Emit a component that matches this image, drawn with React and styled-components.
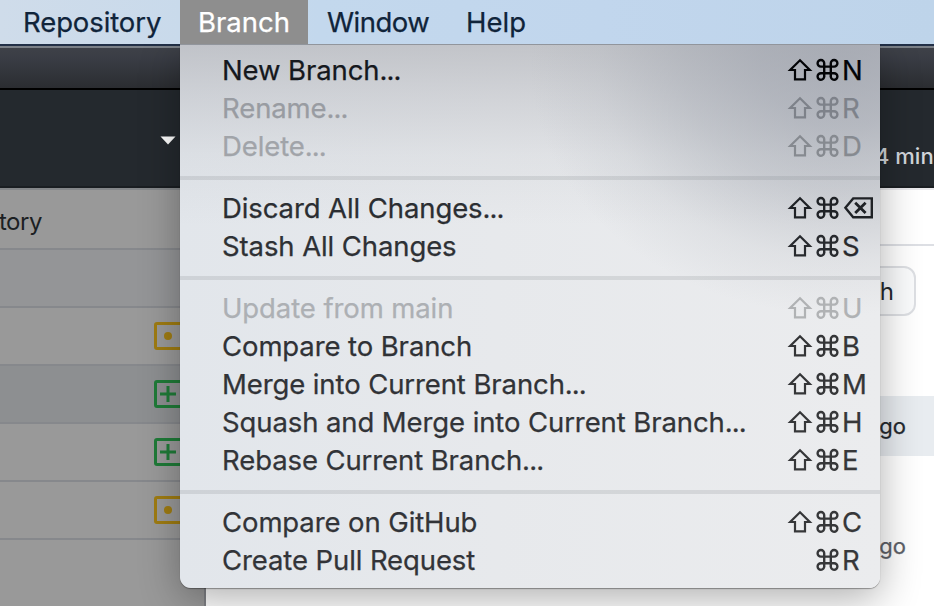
import React from "react";
import styled, { createGlobalStyle, css } from "styled-components";

const GlobalStyle = createGlobalStyle`
  * { box-sizing: border-box; }
  html, body { margin: 0; padding: 0; overflow: hidden; background: #fff; }
  body { font-family: Inter, "Liberation Sans", sans-serif; }
`;

const Screen = styled.div`
  position: relative;
  display: flex;
  flex-direction: column;
  width: 934px;
  height: 606px;
  overflow: hidden;
  background: #fff;
`;

const MenuBar = styled.nav`
  display: flex;
  flex: 0 0 44px;
  padding-left: 4px;
  background: linear-gradient(90deg, #cfdcea 0, #c9daeb 180px, #c3d8ed 320px, #c1d6ed 600px, #bed4ea 100%);
`;

const MenuTitle = styled.div`
  flex: 0 0 ${(p) => p.$width}px;
  padding-left: ${(p) => p.$pad || 18}px;
  font-size: 27.5px;
  line-height: 44px;
  letter-spacing: ${(p) => p.$track || 0}px;
  white-space: nowrap;
  color: ${(p) => (p.$active ? "#fff" : "#10243a")};
  background: ${(p) => (p.$active ? "#8e8e8e" : "transparent")};
  -webkit-text-stroke: 0.25px currentColor;
`;

const TitleBar = styled.div`
  flex: 0 0 46px;
  border-top: 2px solid #223047;
  border-bottom: 2px solid #000;
  background: linear-gradient(#7b8087 0, #7b8087 2px, #3e4148 2px, #3a3d45 12px, #2b2d31 100%);
`;

const Toolbar = styled.div`
  display: flex;
  align-items: center;
  flex: 0 0 98px;
  padding-left: 160px;
  background: #24292e;
  border-bottom: 2px solid #1a1e22;
`;

const Caret = styled.svg`
  flex: none;
  width: 16px;
  height: 9px;
  margin-top: 4px;
`;

const ToolbarStatus = styled.span`
  margin: 35px 0 0 699px;
  font-size: 22px;
  font-weight: 450;
  line-height: 26px;
  white-space: nowrap;
  color: #d1d5da;
`;

const Body = styled.div`
  display: flex;
  flex: 1;
  min-height: 0;
`;

const Sidebar = styled.aside`
  flex: 0 0 206px;
  border-top: 2px solid #84878a;
  border-right: 2px solid #7f8185;
  background: #999;
`;

const sidebarCell = css`
  display: flex;
  align-items: center;
  height: 58px;
  border-bottom: 2px solid #86888c;
`;

const SidebarTab = styled.div`
  ${sidebarCell}
  height: 60px;
  padding-top: 4px;
  font-size: 24px;
  color: #1c1f23;

  span {
    margin-left: -1px;
    letter-spacing: -0.5px;
  }
`;

const SidebarRow = styled.div`
  ${sidebarCell}
  padding-left: 154px;
  background: ${(p) => p.$fill || "#999"};
`;

const StatusSvg = styled.svg`
  width: 28px;
  height: 28px;
`;

const Content = styled.main`
  display: flex;
  flex-direction: column;
  flex: 1;
  align-items: stretch;
  border-top: 2px solid #e9e9ec;
`;

const ContentHeader = styled.div`
  flex: 0 0 56px;
  border-bottom: 2px solid #dddfe4;
`;

const FilterBar = styled.div`
  display: flex;
  flex: 0 0 150px;
  justify-content: flex-end;
  align-items: flex-start;
  padding: 20px 18px 0 0;
`;

const BranchButton = styled.div`
  width: 180px;
  height: 50px;
  padding-right: 20px;
  border: 2px solid #dddfe3;
  border-radius: 12px;
  background: #fafbfc;
  font-size: 24px;
  line-height: 47px;
  text-align: right;
  color: #24292e;
`;

const CommitRow = styled.div`
  flex: 0 0 ${(p) => p.$height}px;
  padding: 0 28px 0 0;
  font-size: 22px;
  line-height: ${(p) => p.$line}px;
  text-align: right;
  color: ${(p) => (p.$selected ? "#24292e" : "#5d6168")};
  background: ${(p) => (p.$selected ? "#e8ecf0" : "#fff")};
  -webkit-text-stroke: 0.25px currentColor;
`;

const Menu = styled.div`
  position: absolute;
  left: 180px;
  top: 44px;
  width: 700px;
  height: 544px;
  padding-top: 6px;
  border-top: 1px solid #91959c;
  border-radius: 0 0 11px 11px;
  background:
    radial-gradient(ellipse 310px 250px at 660px 20px, rgba(150, 155, 166, 0.62) 0, rgba(151, 156, 167, 0.55) 25%, rgba(155, 160, 170, 0.4) 50%, rgba(165, 170, 178, 0.15) 78%, rgba(175, 180, 188, 0) 100%),
    linear-gradient(rgba(172, 174, 180, 0.62) 0, rgba(182, 184, 190, 0.46) 50px, rgba(192, 195, 200, 0.2) 110px, rgba(205, 208, 212, 0) 180px),
    linear-gradient(90deg, #e2e6eb 0, #e7e9ec 45%, #ebecee 100%);
  box-shadow: 0 1px 1px 0 rgba(0, 0, 0, 0.35), 0 10px 40px rgba(0, 0, 0, 0.32);
  clip-path: inset(0 -60px -60px -60px);
`;

const Separator = styled.hr`
  height: 4px;
  margin: 11px 0 9px;
  border: 0;
  background: rgba(120, 125, 133, 0.19);
`;

const MenuItem = styled.div`
  display: flex;
  align-items: center;
  height: 38px;
  padding-left: 42px;
  font-size: 27.5px;
  white-space: nowrap;
  color: ${(p) => p.$color};
  -webkit-text-stroke: 0.25px currentColor;
`;

const ItemLabel = styled.span`
  flex: 0 0 565px;
  letter-spacing: -0.1px;
`;

const Dots = styled.span`
  letter-spacing: -0.9px;
`;

const Shortcut = styled.span`
  display: grid;
  grid-template-columns: 28px 27px auto;
  align-items: center;
  color: ${(p) => p.$color};
`;

const Glyph = styled.svg`
  display: block;
  height: 24px;
  fill: none;
  stroke: currentColor;
  stroke-width: 2.2;
`;

const Shift = () => (
  <Glyph width="26" viewBox="0 0 26 24">
    <path d="M13 2.2 L22.8 12 H18 V21.3 H8 V12 H3.2 Z" />
  </Glyph>
);

const Command = () => (
  <Glyph width="24" viewBox="0 0 24 24">
    <path
      strokeWidth="2.4"
      d="M9.2 8.6 V5.4 A3.3 3.3 0 1 0 5.9 8.6 H19.1 A3.3 3.3 0 1 0 15.8 5.4 V18.4 A3.3 3.3 0 1 0 19.1 15.2 H5.9 A3.3 3.3 0 1 0 9.2 18.4 Z"
    />
  </Glyph>
);

const Backspace = () => (
  <Glyph width="32" viewBox="0 0 32 24">
    <path strokeWidth="2.4" d="M11.2 2.4 H29.8 V21.2 H11.2 L3.4 11.8 Z" />
    <path strokeWidth="2.8" d="M13.2 6.8 L23.6 17 M23.6 6.8 L13.2 17" />
  </Glyph>
);

const StatusIcon = ({ kind }) => {
  const color = kind === "added" ? "#1f7b38" : "#9f7c12";
  return (
    <StatusSvg viewBox="0 0 28 28" fill="none" stroke={color} strokeWidth="3">
      <rect x="1.5" y="1.5" width="26" height="25" rx="1.5" />
      {kind === "added" ? (
        <path d="M14 6 V22 M6 14 H22" />
      ) : (
        <circle cx="14" cy="14" r="4" fill={color} stroke="none" />
      )}
    </StatusSvg>
  );
};

const groups = [
  [
    { label: "New Branch", more: true, k: "N", color: "#15181d", keyColor: "#030407" },
    { label: "Rename", more: true, k: "R", color: "#999ca2", keyColor: "#7e828a" },
    { label: "Delete", more: true, k: "D", color: "#a1a4a9", keyColor: "#868a90" },
  ],
  [
    { label: "Discard All Changes", more: true, k: "delete", color: "#2b2e32", keyColor: "#1f2226" },
    { label: "Stash All Changes", k: "S", color: "#2e3135", keyColor: "#282a2e" },
  ],
  [
    { label: "Update from main", k: "U", color: "#adb0b4", keyColor: "#b0b2b4" },
    { label: "Compare to Branch", k: "B", color: "#303236", keyColor: "#343537" },
    { label: "Merge into Current Branch", more: true, k: "M", color: "#313337", keyColor: "#353638" },
    { label: "Squash and Merge into Current Branch", more: true, k: "H", color: "#323438", keyColor: "#363739" },
    { label: "Rebase Current Branch", more: true, k: "E", color: "#323438", keyColor: "#363739" },
  ],
  [
    { label: "Compare on GitHub", k: "C", color: "#323438", keyColor: "#363739" },
    { label: "Create Pull Request", k: "R", color: "#323438", keyColor: "#363739", noShift: true },
  ],
];

export default function App() {
  return (
    <>
      <GlobalStyle />
      <Screen>
        <MenuBar>
          <MenuTitle $width={176} $pad={19} $track={-0.1}>Repository</MenuTitle>
          <MenuTitle $width={128} $active>Branch</MenuTitle>
          <MenuTitle $width={140} $pad={19} $track={-0.5}>Window</MenuTitle>
          <MenuTitle $width={100}>Help</MenuTitle>
        </MenuBar>
        <TitleBar />
        <Toolbar>
          <Caret viewBox="0 0 16 9">
            <path d="M0.5 0.5 H15.5 L8 8.5 Z" fill="#fff" />
          </Caret>
          <ToolbarStatus>4 min</ToolbarStatus>
        </Toolbar>
        <Body>
          <Sidebar>
            <SidebarTab><span>tory</span></SidebarTab>
            <SidebarRow $fill="#949597" />
            <SidebarRow><StatusIcon kind="modified" /></SidebarRow>
            <SidebarRow $fill="#8d8f91"><StatusIcon kind="added" /></SidebarRow>
            <SidebarRow><StatusIcon kind="added" /></SidebarRow>
            <SidebarRow><StatusIcon kind="modified" /></SidebarRow>
          </Sidebar>
          <Content>
            <ContentHeader />
            <FilterBar>
              <BranchButton>h</BranchButton>
            </FilterBar>
            <CommitRow $height={60} $line={60} $selected>go</CommitRow>
            <CommitRow $height={150} $line={180}>go</CommitRow>
          </Content>
        </Body>

        <Menu role="menu">
          {groups.map((items, g) => (
            <React.Fragment key={g}>
              {g > 0 && <Separator />}
              {items.map((item) => (
                <MenuItem key={item.label} role="menuitem" $color={item.color}>
                  <ItemLabel>
                    {item.label}
                    {item.more && <Dots>...</Dots>}
                  </ItemLabel>
                  <Shortcut $color={item.keyColor}>
                    {item.noShift ? <span /> : <Shift />}
                    <Command />
                    {item.k === "delete" ? <Backspace /> : <span>{item.k}</span>}
                  </Shortcut>
                </MenuItem>
              ))}
            </React.Fragment>
          ))}
        </Menu>
      </Screen>
    </>
  );
}
